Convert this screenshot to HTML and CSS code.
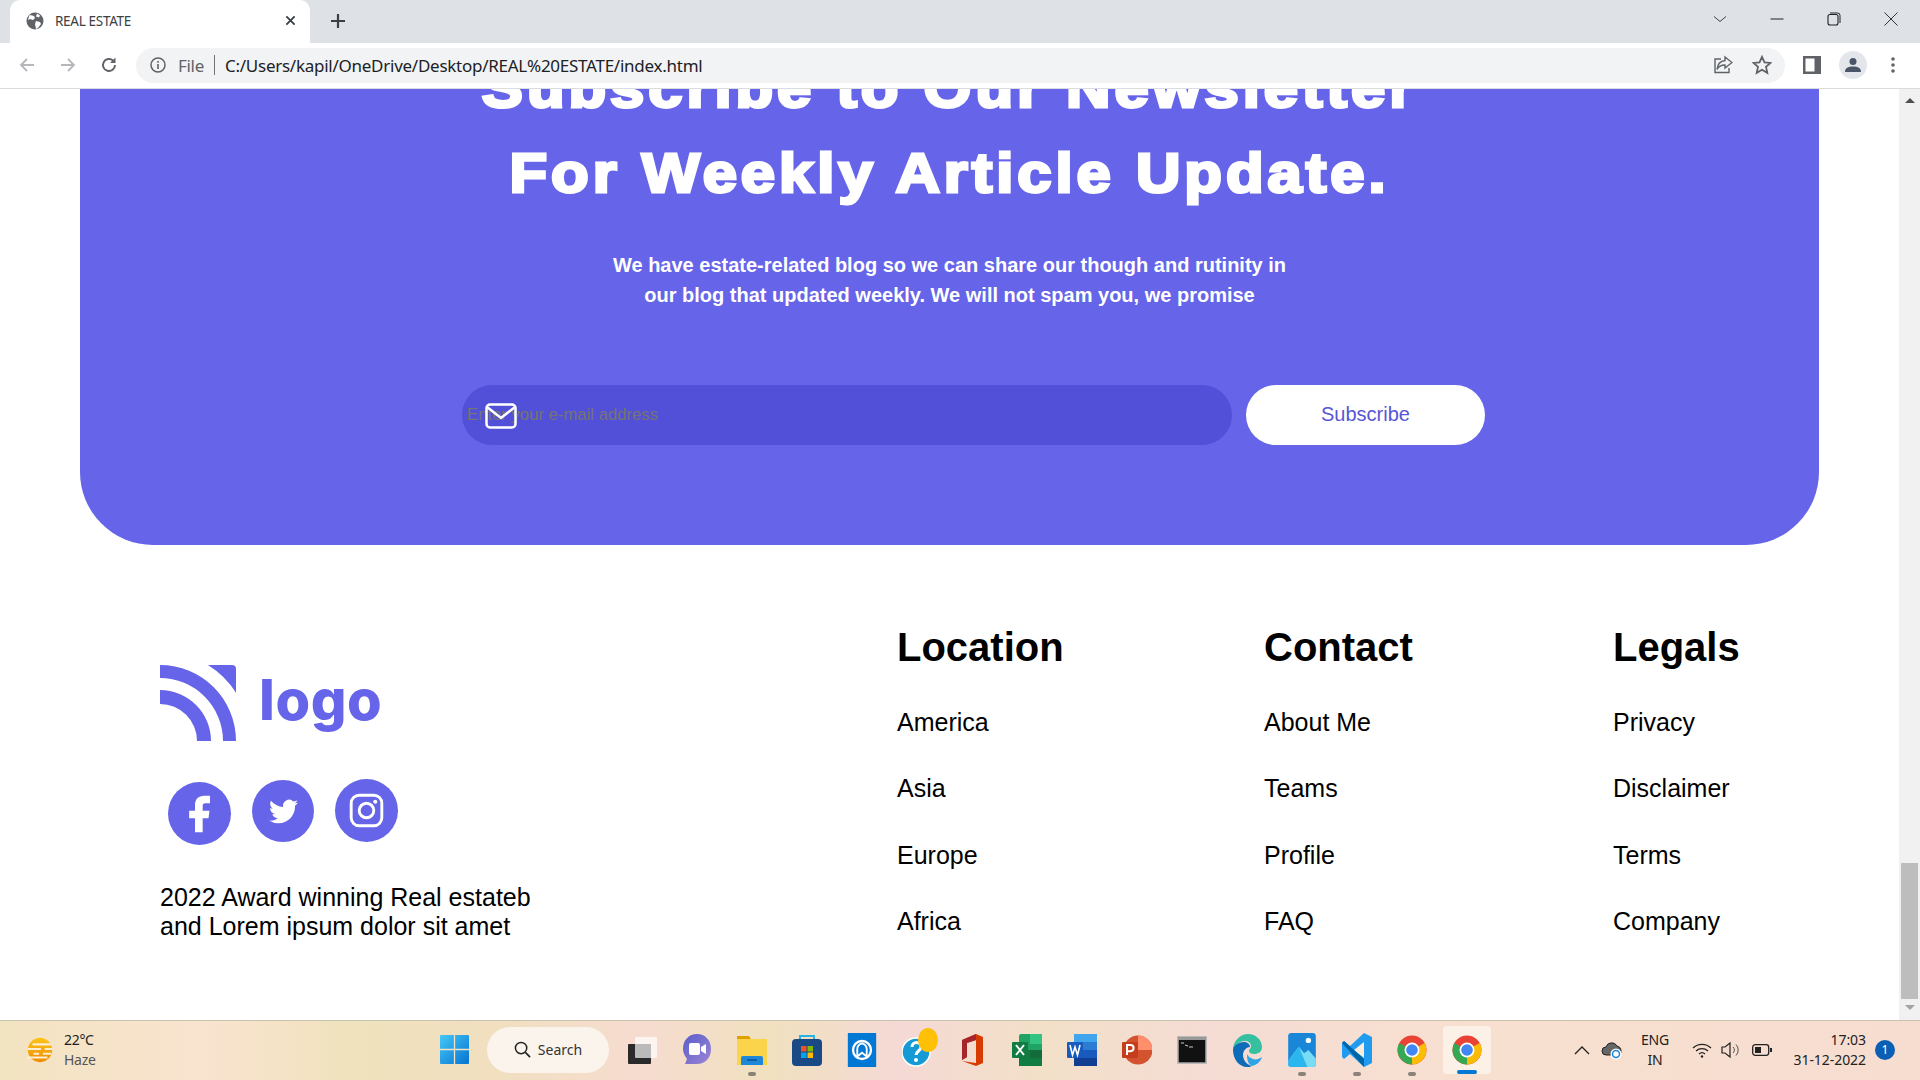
FILE: index.html
```html
<!DOCTYPE html>
<html lang="en">
<head>
<meta charset="utf-8">
<title>REAL ESTATE</title>
<link rel="stylesheet" href="styles.css">
</head>
<body>
<div class="screen">
  <header class="tabstrip">
    <div class="tab">
      <svg class="favicon" viewBox="0 0 18 18"><circle cx="9" cy="9" r="8.500" fill="#5f6368"/><path d="M4 3l4 1 1 2-2 2-3-1-2 1 1-4zM10 9l4 1 1 2-3 4-2 1-1-5zM11 1.500l3 2-1 2-3-1z" fill="#fff"/></svg>
      <span class="tab-title">REAL ESTATE</span>
      <svg class="tab-close" viewBox="0 0 12 12"><path d="M1.500 1.500l9 9M10.500 1.500l-9 9" stroke="#3c4043" stroke-width="2" fill="none"/></svg>
    </div>
    <svg class="newtab" viewBox="0 0 16 16"><path d="M8 1v14M1 8h14" stroke="#3c4043" stroke-width="2.200" fill="none"/></svg>
    <div class="winctl">
      <svg class="winicon" viewBox="0 0 14 14"><path d="M1 4.500l6 5 6-5" stroke="#444" fill="none"/></svg>
      <svg class="winicon" viewBox="0 0 14 14"><path d="M0.500 7h13" stroke="#222" fill="none"/></svg>
      <svg class="winicon" viewBox="0 0 14 14"><rect x="1" y="2.500" width="10" height="10.500" rx="2" stroke="#222" stroke-width="1.100" fill="none"/><path d="M3 1h7.500a2.500 2.500 0 0 1 2.500 2.500V11" stroke="#222" fill="none"/></svg>
      <svg class="winicon" viewBox="0 0 14 14"><path d="M0.500 0.500l13 13M13.500 0.500l-13 13" stroke="#333" fill="none"/></svg>
    </div>
  </header>
  <nav class="toolbar">
    <svg class="navicon" viewBox="0 0 18 18"><path d="M16 9H3M9 3L3 9l6 6" stroke="#b5b7ba" stroke-width="1.800" fill="none"/></svg>
    <svg class="navicon" viewBox="0 0 18 18"><path d="M2 9h13M9 3l6 6-6 6" stroke="#b5b7ba" stroke-width="1.800" fill="none"/></svg>
    <svg class="navicon" viewBox="0 0 18 18"><path d="M15 9a6 6 0 1 1-1.800-4.300" stroke="#5f6368" stroke-width="1.900" fill="none"/><path d="M15.500 1.500v5.500H10z" fill="#5f6368"/></svg>
    <div class="omnibox">
      <svg class="info" viewBox="0 0 16 16"><circle cx="8" cy="8" r="7" stroke="#5f6368" stroke-width="1.500" fill="none"/><path d="M8 7v5M8 4v1.800" stroke="#5f6368" stroke-width="1.600"/></svg>
      <span class="scheme">File</span>
      <span class="sep"></span>
      <span class="url">C:/Users/kapil/OneDrive/Desktop/REAL%20ESTATE/index.html</span>
      <svg class="omni-share" viewBox="0 0 20 20"><path d="M8 4H2v13.500h14V13" stroke="#5f6368" stroke-width="1.400" fill="none"/><path d="M12 2l7 5.500-7 5.500V10c-4 0-6.500 1.500-8 4.500C4.500 9.500 7.500 6 12 5.500z" stroke="#5f6368" stroke-width="1.400" fill="#f1f3f4"/></svg>
      <svg class="omni-star" viewBox="0 0 20 20"><path d="M10 1.800l2.500 5.500 6 .6-4.500 4 1.300 6L10 14.800l-5.300 3.100 1.300-6-4.500-4 6-.6z" stroke="#5f6368" stroke-width="1.800" fill="none"/></svg>
    </div>
    <svg class="panel" viewBox="0 0 18 18"><rect x="0" y="0" width="18" height="18" fill="#5f6368"/><rect x="2.500" y="2.500" width="9" height="13" fill="#fff"/></svg>
    <div class="avatar">
      <svg class="avatar-icon" viewBox="0 0 16 16"><circle cx="8" cy="4.500" r="3.500" fill="#4a5568"/><path d="M0 15c0-4 3-5.500 8-5.500s8 1.500 8 5.500z" fill="#4a5568"/></svg>
    </div>
    <svg class="menu" viewBox="0 0 4 18"><circle cx="2" cy="3" r="1.800" fill="#5f6368"/><circle cx="2" cy="9" r="1.800" fill="#5f6368"/><circle cx="2" cy="15" r="1.800" fill="#5f6368"/></svg>
  </nav>

  <div class="viewport">
    <main class="page">
      <section class="newsletter">
        <h2 class="news-title">Subscribe to Our Newsletter<br>For Weekly Article Update.</h2>
        <p class="news-text">We have estate-related blog so we can share our though and rutinity in<br>our blog that updated weekly. We will not spam you, we promise</p>
        <form class="news-form">
          <div class="field">
            <input class="email" type="text" placeholder="Enter your e-mail address">
            <svg class="envelope" viewBox="0 0 32 26"><rect x="1.500" y="1.500" width="29" height="23" rx="3.500" stroke="#fff" stroke-width="2.500" fill="none"/><path d="M2 4l14 11L30 4" stroke="#fff" stroke-width="2.500" fill="none"/></svg>
          </div>
          <button class="subscribe" type="button">Subscribe</button>
        </form>
      </section>
      <footer class="footer">
        <div class="brand">
          <div class="logo">
            <svg class="logo-mark" viewBox="0 0 76 76"><path d="M48 0H72a4 4 0 0 1 4 4V27.700A90 90 0 0 0 48 0Z" fill="#6664e8"/><path d="M0 0A76 76 0 0 1 76 76H63A63 63 0 0 0 0 13Z" fill="#6664e8"/><path d="M0 25A51 51 0 0 1 51 76H37A37 37 0 0 0 0 39Z" fill="#6664e8"/></svg>
            <span class="logo-word">logo</span>
          </div>
          <div class="social">
            <span class="social-dot social-fb"><svg class="fb-icon" viewBox="0 0 24 24"><path d="M15 5.500h3V1h-3.500c-3.500 0-5.500 2.200-5.500 5.500V10H5.500v4.500H9V23h4.600v-8.500h3.500l.6-4.500h-4.100V7c0-1 .5-1.500 1.400-1.500z" fill="#fff"/></svg></span>
            <span class="social-dot social-tw"><svg class="tw-icon" viewBox="0 0 24 24"><path d="M23.953 4.570a10 10 0 01-2.825.775 4.958 4.958 0 002.163-2.723c-.951.555-2.005.959-3.127 1.184a4.920 4.920 0 00-8.384 4.482C7.690 8.095 4.067 6.130 1.640 3.162a4.822 4.822 0 00-.666 2.475c0 1.710.870 3.213 2.188 4.096a4.904 4.904 0 01-2.228-.616v.060a4.923 4.923 0 003.946 4.827 4.996 4.996 0 01-2.212.085 4.936 4.936 0 004.604 3.417 9.867 9.867 0 01-6.102 2.105c-.390 0-.779-.023-1.170-.067a13.995 13.995 0 007.557 2.209c9.053 0 13.998-7.496 13.998-13.985 0-.210 0-.420-.015-.630A9.935 9.935 0 0024 4.590z" fill="#fff"/></svg></span>
            <span class="social-dot"><svg class="ig" viewBox="0 0 24 24"><rect x="1.500" y="1.500" width="21" height="21" rx="5.500" stroke="#fff" stroke-width="2" fill="none"/><circle cx="12" cy="12" r="5" stroke="#fff" stroke-width="2" fill="none"/><circle cx="18" cy="6" r="1.400" fill="#fff"/></svg></span>
          </div>
          <p class="brand-text">2022 Award winning Real estateb<br>and Lorem ipsum dolor sit amet</p>
        </div>
        <div class="col col-location">
          <h3 class="col-title">Location</h3>
          <a class="col-link">America</a><a class="col-link">Asia</a><a class="col-link">Europe</a><a class="col-link">Africa</a>
        </div>
        <div class="col col-contact">
          <h3 class="col-title">Contact</h3>
          <a class="col-link">About Me</a><a class="col-link">Teams</a><a class="col-link">Profile</a><a class="col-link">FAQ</a>
        </div>
        <div class="col">
          <h3 class="col-title">Legals</h3>
          <a class="col-link">Privacy</a><a class="col-link">Disclaimer</a><a class="col-link">Terms</a><a class="col-link">Company</a>
        </div>
      </footer>
    </main>
    <aside class="scrollbar">
      <span class="arrow-up"></span>
      <span class="thumb"></span>
      <span class="arrow-down"></span>
    </aside>
  </div>

  <div class="taskbar">
    <div class="weather">
      <svg class="weather-icon" viewBox="0 0 30 32"><defs><linearGradient id="sun" x1="0" y1="0" x2="0" y2="1"><stop offset="0" stop-color="#fcc419"/><stop offset="1" stop-color="#f08c00"/></linearGradient></defs><circle cx="15" cy="16" r="13" fill="url(#sun)"/><path d="M7 10h20M2 15h14M20 15h8M8 20h6M18 20h9M1 24h22" stroke="#fbeed3" stroke-width="2.200"/></svg>
      <div class="weather-text"><span class="temp">22°C</span><span class="cond">Haze</span></div>
    </div>
    <svg class="start" viewBox="0 0 29 29"><defs><linearGradient id="win" x1="0" y1="0" x2="1" y2="1"><stop offset="0" stop-color="#45c8f8"/><stop offset="1" stop-color="#0673d0"/></linearGradient><linearGradient id="meet" x1="0" y1="0" x2="1" y2="1"><stop offset="0" stop-color="#5a5cc8"/><stop offset="1" stop-color="#9b86d6"/></linearGradient></defs><rect width="29" height="29" fill="url(#win)" rx="1"/><path d="M14.500 0v29M0 14.500h29" stroke="#f2e3c6" stroke-width="1.300"/></svg>
    <div class="search">
      <svg class="search-icon" viewBox="0 0 18 18"><circle cx="7.500" cy="7.500" r="6" stroke="#222" stroke-width="1.600" fill="none"/><path d="M12 12l5 5" stroke="#222" stroke-width="1.800"/></svg>
      <span class="search-text">Search</span>
    </div>
    <div class="apps">
      <div class="app"><svg class="app-icon" viewBox="0 0 30 34"><rect x="1" y="11" width="23" height="20" rx="1" fill="#2a2a2a"/><rect x="8" y="4" width="22" height="21" rx="1" fill="#fff" fill-opacity=".68"/></svg></div>
      <div class="app"><svg class="app-icon" viewBox="0 0 30 34"><path d="M15 1c8 0 14 6 14 15s-6 15-14 15H3l2-5C3 23 1 20 1 16 1 7 7 1 15 1z" fill="url(#meet)"/><rect x="7" y="10" width="11" height="12" rx="2" fill="#fff"/><path d="M19 14l5-3v10l-5-3z" fill="#fff"/></svg></div>
      <div class="app has-dot"><svg class="app-icon" viewBox="0 0 30 34"><path d="M0 3h12l2 3v4H0z" fill="#e0a100"/><rect y="6" width="30" height="26" fill="#fbd44c"/><path d="M4 32v-7a2 2 0 0 1 2-2h18a2 2 0 0 1 2 2v7z" fill="#1e88d6"/><rect x="10" y="26" width="10" height="2" fill="#0d5da8"/></svg></div>
      <div class="app"><svg class="app-icon" viewBox="0 0 30 34"><path d="M8 7V3h14v4" stroke="#2bb3e8" stroke-width="2" fill="none"/><rect y="6" width="30" height="27" rx="4" fill="#1a4a85"/><rect x="9" y="13" width="5.500" height="5.500" fill="#f25022"/><rect x="15.500" y="13" width="5.500" height="5.500" fill="#7fba00"/><rect x="9" y="19.500" width="5.500" height="5.500" fill="#00a4ef"/><rect x="15.500" y="19.500" width="5.500" height="5.500" fill="#ffb900"/></svg></div>
      <div class="app"><svg class="app-icon" viewBox="0 0 30 36"><rect width="30" height="36" fill="#0078d4"/><circle cx="15" cy="18" r="9.500" stroke="#fff" stroke-width="2.500" fill="none"/><path d="M10 25v-8c0-3 2-5 5-6 3 1 5 3 5 6v8l-5-4z" stroke="#fff" stroke-width="2" fill="none"/></svg></div>
      <div class="app has-badge"><svg class="app-icon" viewBox="0 0 30 34"><circle cx="14" cy="19" r="14" fill="#149ad4" stroke="#fff" stroke-width="1.500"/><path d="M10 14c0-6 9-6 9 0 0 4-5 4-5 8" stroke="#fff" stroke-width="3" fill="none"/><circle cx="14" cy="27" r="2" fill="#fff"/></svg><span class="badge-dot"></span></div>
      <div class="app"><svg class="app-icon" viewBox="0 0 26 34"><path d="M3 7L17 1l7 3v26l-7 3-14-5 14 2V7L8 10v14L3 27z" fill="#d83b01"/><path d="M3 7L17 1v6L8 10v14l-5 3z" fill="#a4262c"/></svg></div>
      <div class="app"><svg class="app-icon" viewBox="0 0 30 34"><rect x="7" y="1" width="23" height="32" rx="2" fill="#21a366"/><rect x="18" y="1" width="12" height="10" fill="#33c481"/><rect x="7" y="17" width="23" height="16" fill="#107c41"/><rect x="18" y="17" width="12" height="8" fill="#185c37" opacity=".5"/><rect y="9" width="16" height="16" rx="1" fill="#107c41"/><path d="M4 12l8 10M12 12L4 22" stroke="#fff" stroke-width="2"/></svg></div>
      <div class="app"><svg class="app-icon" viewBox="0 0 30 34"><rect x="7" y="1" width="23" height="32" rx="2" fill="#2b7cd3"/><rect x="7" y="1" width="23" height="8" fill="#41a5ee"/><rect x="7" y="17" width="23" height="8" fill="#185abd"/><rect x="7" y="25" width="23" height="8" fill="#103f91"/><rect y="9" width="16" height="16" rx="1" fill="#185abd"/><path d="M3 12l2.500 10L8 14l2.500 8L13 12" stroke="#fff" stroke-width="1.600" fill="none"/></svg></div>
      <div class="app"><svg class="app-icon" viewBox="0 0 30 34"><circle cx="16" cy="17" r="14.500" fill="#d35230"/><path d="M16 2.500A14.500 14.500 0 0 1 30.500 17H16z" fill="#ff8f6b"/><rect y="9" width="16" height="16" rx="1" fill="#c43e1c"/><path d="M5 22V12h3.500a3 3 0 0 1 0 6.200H5" stroke="#fff" stroke-width="2" fill="none"/></svg></div>
      <div class="app"><svg class="app-icon" viewBox="0 0 30 30"><rect x="1" y="2" width="28" height="26" fill="#111" stroke="#aaa" stroke-width="1.500"/><rect x="1" y="2" width="28" height="3" fill="#999"/><path d="M4 8h3M8 10l3 1M12 12h4" stroke="#ccc"/></svg></div>
      <div class="app"><svg class="app-icon" viewBox="0 0 30 34"><path d="M1 17C1 8 8 1 16 1c8 0 14 6 14 13 0 5-4 7-8 7-3 0-5-1-5-3 0-2 2-2 2-5 0-3-3-5-6-5C8 8 1 13 1 17z" fill="#35c1a0"/><path d="M1 17c0-4 5-8 11-8 3 0 6 2 6 5-3 0-7 3-7 8 0 5 4 10 9 11-2 1-3 1-5 1C7 34 1 26 1 17z" fill="#0c6cb8"/><path d="M20 33c5-1 9-5 10-9-3 2-6 3-9 2-3-1-5-3-6-5 0 6 1 10 5 12z" fill="#2fa5e6"/></svg></div>
      <div class="app has-dot"><svg class="app-icon" viewBox="0 0 26 32"><rect width="26" height="32" rx="3" fill="#1a86d8"/><path d="M0 26l10-13 5 6 4-3 7 8v5a3 3 0 0 1-3 3H3a3 3 0 0 1-3-3z" fill="#79dcf5"/><path d="M0 26l10-13 8 19H3a3 3 0 0 1-3-3z" fill="#2bb6ee"/><circle cx="19" cy="7" r="2.500" fill="#fff"/></svg></div>
      <div class="app has-dot"><svg class="app-icon" viewBox="0 0 30 34"><path d="M22 0l8 4v26l-8 4-14-13-6 5-2-2v-14l2-2 6 5z" fill="#1f9cf0"/><path d="M22 9L12 17l10 8z" fill="#fbeed8"/><path d="M0 10l2-2 20 18v8z" fill="#0065a9"/></svg></div>
      <div class="app has-dot"><svg class="app-icon" viewBox="0 0 32 32"><circle cx="16" cy="16" r="15.500" fill="#ea4335"/><path d="M16 16L29.500 8.500A15.500 15.500 0 0 1 16 31.500z" fill="#fbbc04"/><path d="M16 16L16 31.500A15.500 15.500 0 0 1 2.500 8.500z" fill="#34a853"/><circle cx="16" cy="16" r="8" fill="#fff"/><circle cx="16" cy="16" r="6.200" fill="#4285f4"/></svg></div>
      <div class="app app-active"><svg class="app-icon" viewBox="0 0 32 32"><circle cx="16" cy="16" r="15.500" fill="#ea4335"/><path d="M16 16L29.500 8.500A15.500 15.500 0 0 1 16 31.500z" fill="#fbbc04"/><path d="M16 16L16 31.500A15.500 15.500 0 0 1 2.500 8.500z" fill="#34a853"/><circle cx="16" cy="16" r="8" fill="#fff"/><circle cx="16" cy="16" r="6.200" fill="#4285f4"/></svg></div>
    </div>
    <div class="tray">
      <svg class="tray-chevron" viewBox="0 0 16 10"><path d="M1 9l7-7 7 7" stroke="#222" stroke-width="1.300" fill="none"/></svg>
      <svg class="tray-cloud" viewBox="0 0 22 20"><path d="M5 15a4 4 0 0 1 0-8 6 6 0 0 1 11-1 5 5 0 0 1 2 9z" fill="#666" stroke="#222"/><circle cx="15" cy="14" r="5.500" fill="#fff"/><circle cx="15" cy="14" r="3.500" stroke="#1a86d8" stroke-width="1.500" fill="none"/></svg>
      <div class="lang"><span>ENG</span><span>IN</span></div>
      <svg class="tray-wifi" viewBox="0 0 20 16"><path d="M1 6a13 13 0 0 1 18 0M4 9a9 9 0 0 1 12 0M7 12a4.500 4.500 0 0 1 6 0" stroke="#222" stroke-width="1.300" fill="none"/><circle cx="10" cy="14.500" r="1.200" fill="#222"/></svg>
      <svg class="tray-sound" viewBox="0 0 20 18"><path d="M1 6h3l5-4v14l-5-4H1z" stroke="#222" stroke-width="1.200" fill="none"/><path d="M12 6a4 4 0 0 1 0 6M15 3.500a8 8 0 0 1 0 11" stroke="#555" fill="none"/></svg>
      <svg class="tray-battery" viewBox="0 0 20 12"><rect x="0.700" y="0.700" width="16" height="10.600" rx="2.500" stroke="#222" stroke-width="1.300" fill="none"/><rect x="3" y="3" width="6" height="6" fill="#222"/><rect x="18" y="4" width="2" height="4" fill="#222"/></svg>
      <div class="clock"><span>17:03</span><span>31-12-2022</span></div>
      <span class="notif">1</span>
    </div>
  </div>
</div>
</body>
</html>
```

FILE: styles.css
```css
* { box-sizing: border-box; }
html, body { margin: 0; height: 100%; overflow: hidden; }
body { font-family: "Liberation Sans", Arial, sans-serif; background: #fff; }
.screen { width: 1920px; height: 1080px; display: flex; flex-direction: column; }

/* browser tab strip */
.tabstrip { height: 43px; flex: none; background: #dee1e6; display: flex; align-items: flex-end; padding-left: 10px; }
.tab { width: 300px; height: 43px; background: #fff; border-radius: 10px 10px 0 0; display: flex; align-items: center; padding: 0 14px 2px 16px; }
.favicon { width: 18px; height: 18px; flex: none; }
.tab-title { font-family: "Noto Sans", sans-serif; font-size: 13.500px; color: #3c4043; margin-left: 11px; flex: 1; letter-spacing: -0.300px; }
.tab-close { width: 11px; height: 11px; flex: none; }
.newtab { width: 16px; height: 16px; margin: 0 0 14px 20px; flex: none; }
.winctl { margin-left: auto; align-self: stretch; display: flex; align-items: center; gap: 43px; padding: 0 22px 6px 0; }
.winicon { width: 14px; height: 14px; flex: none; }

/* browser toolbar */
.toolbar { height: 46px; flex: none; background: #fff; border-bottom: 1px solid #dadce0; display: flex; align-items: center; padding: 0 0 1px 18px; }
.navicon { width: 18px; height: 18px; flex: none; margin-right: 23px; }
.omnibox { width: 1649px; height: 35px; margin-left: -5px; background: #f1f3f4; border-radius: 18px; display: flex; align-items: center; padding: 0 13px 0 14px; }
.info { width: 16px; height: 16px; flex: none; }
.scheme { font-family: "Noto Sans", sans-serif; font-size: 17px; color: #5f6368; margin-left: 12px; letter-spacing: -0.300px; }
.sep { width: 1px; height: 20px; background: #70757a; margin: 0 10px 0 10px; }
.url { font-family: "Noto Sans", sans-serif; font-size: 17px; color: #202124; letter-spacing: -0.260px; flex: 1; }
.omni-share { width: 20px; height: 20px; flex: none; }
.omni-star { width: 20px; height: 20px; flex: none; margin: 0 0 0 19px; }
.panel { width: 18px; height: 18px; flex: none; margin-left: 18px; }
.avatar { width: 28px; height: 28px; border-radius: 50%; background: #e3e6ea; margin-left: 18px; display: flex; align-items: center; justify-content: center; flex: none; }
.avatar-icon { width: 16px; height: 16px; }
.menu { width: 4px; height: 18px; margin-left: 24px; flex: none; }

/* page viewport */
.viewport { flex: 1; min-height: 0; display: flex; }
.page { flex: 1; min-width: 0; overflow: hidden; background: #fff; }
.scrollbar { width: 21px; flex: none; background: #f1f1f1; display: flex; flex-direction: column; align-items: center; }
.arrow-up { margin-top: 9px; border: 5px solid transparent; border-top: 0; border-bottom: 5px solid #505050; }
.thumb { width: 17px; height: 136px; background: #bdbdbd; margin-top: 760px; }
.arrow-down { margin-top: 6px; border: 5px solid transparent; border-bottom: 0; border-top: 5px solid #a3a3a3; }

/* newsletter card: its heading is scrolled partly out of view */
.newsletter { display: flow-root; margin: 0 80px; height: 456px; background: #6664e8; border-radius: 0 0 73px 73px; color: #fff; text-align: center; }
.news-title { margin: -44px 0 0; font-size: 56px; line-height: 85px; font-weight: 700; letter-spacing: 3.600px; -webkit-text-stroke: 3px #fff; transform: scaleX(1.1); }
.news-text { margin: 35px 0 0; font-size: 20px; line-height: 30px; font-weight: 700; }
.news-form { display: flex; gap: 14px; padding-left: 382px; margin-top: 75px; }
.field { position: relative; width: 770px; height: 60px; }
.email { width: 100%; height: 100%; border: 0; outline: 0; border-radius: 30px; background: #5250d9; padding: 0 5px; font-family: "Liberation Sans", sans-serif; font-size: 16.700px; }
.email::placeholder { color: #757570; }
.envelope { position: absolute; left: 23px; top: 18px; width: 32px; height: 26px; }
.subscribe { width: 239px; height: 60px; border: 0; border-radius: 30px; padding: 0 0 2px; background: #fff; color: #5856d6; font-family: "Liberation Sans", sans-serif; font-size: 20px; }

/* footer */
.footer { display: flex; padding-left: 160px; }
.brand { width: 737px; padding-top: 120px; }
.logo { display: flex; align-items: flex-start; }
.logo-mark { width: 76px; height: 76px; flex: none; }
.logo-word { font-family: Inter, sans-serif; font-weight: 800; font-size: 56px; line-height: 60px; letter-spacing: 0.600px; color: #6664e8; margin: 5px 0 0 23px; }
.social { display: flex; gap: 21px; margin: 38px 0 0 7px; align-items: flex-start; height: 66px; }
.social-dot { width: 63px; height: 63px; border-radius: 50%; background: #6664e8; display: flex; align-items: center; justify-content: center; }
.social-fb { margin: 3px 0 0 1px; }
.social-tw { margin-top: 1px; width: 62px; height: 62px; }
.fb-icon { width: 40px; height: 40px; }
.tw-icon { width: 29px; height: 29px; }
.ig { width: 35px; height: 35px; }
.brand-text { margin: 38px 0 0; font-size: 25px; line-height: 29px; color: #000; }
.col { display: flex; flex-direction: column; padding-top: 79px; }
.col-location { width: 367px; }
.col-contact { width: 349px; }
.col-title { margin: 0 0 37px; font-size: 40px; line-height: 46px; font-weight: 700; color: #000; }
.col-link { font-size: 25px; line-height: 30px; color: #000; margin-bottom: 36.300px; }

/* windows taskbar */
.taskbar { height: 60px; flex: none; border-top: 1px solid #c9c2b0; background: linear-gradient(90deg, #f2e3c0 0, #f9e4d0 200px, #f0e2bd 345px, #f1dfc0 500px, #f6dcd0 640px, #f0e1bf 770px, #f5d9d5 900px, #f2e0c8 1040px, #f5dcd4 1200px, #f8e0d0 1500px, #f6ddd0 1920px); display: flex; align-items: center; position: relative; padding: 0 0 2px 26px; }
.weather { width: 414px; display: flex; align-items: center; flex: none; }
.weather-icon { width: 28px; height: 32px; flex: none; }
.weather-text { display: flex; flex-direction: column; margin-left: 10px; font-family: "Noto Sans", sans-serif; font-size: 14px; line-height: 20px; letter-spacing: -0.300px; }
.temp { color: #222; }
.cond { color: #555; }
.start { width: 29px; height: 29px; flex: none; }
.search { width: 122px; height: 46px; border-radius: 23px; background: #faf4ec; margin-left: 18px; display: flex; align-items: center; justify-content: center; gap: 7px; flex: none; }
.search-icon { width: 17px; height: 17px; flex: none; }
.search-text { font-family: "Noto Sans", sans-serif; font-size: 14px; color: #333; letter-spacing: 0; }
.apps { display: flex; gap: 25px; margin-left: 18px; flex: none; }
.app { width: 30px; height: 36px; display: flex; align-items: center; justify-content: center; position: relative; }
.app-icon { width: 30px; height: 34px; flex: none; }
.has-dot::after { content: ""; position: absolute; left: 11px; bottom: -8px; width: 8px; height: 4px; border-radius: 2px; background: #8a8279; }
.badge-dot { position: absolute; right: -6px; top: -4px; width: 20px; height: 24px; border-radius: 50%; background: #ffc107; }
.app-active::before { content: ""; position: absolute; left: -9px; top: -6px; width: 48px; height: 48px; border-radius: 4px; background: #fbf1e7; }
.app-active::after { content: ""; position: absolute; left: 5px; bottom: -6px; width: 20px; height: 4px; border-radius: 2px; background: #0078d4; }
.app-active .app-icon { position: relative; }
.tray { display: flex; align-items: center; margin-left: 90px; flex: none; }
.tray-chevron { width: 16px; height: 10px; flex: none; margin-left: 2px; }
.tray-cloud { width: 22px; height: 20px; margin-left: 11px; flex: none; }
.lang { width: 44px; margin-left: 10px; display: flex; flex-direction: column; align-items: center; font-family: "Noto Sans", sans-serif; font-size: 14px; line-height: 20px; color: #222; letter-spacing: -0.200px; }
.tray-wifi { width: 20px; height: 16px; margin-left: 15px; flex: none; }
.tray-sound { width: 20px; height: 18px; margin-left: 9px; flex: none; }
.tray-battery { width: 20px; height: 12px; margin-left: 11px; flex: none; }
.clock { width: 92px; margin-left: 2px; display: flex; flex-direction: column; align-items: flex-end; font-family: "Noto Sans", sans-serif; font-size: 14px; line-height: 20px; color: #222; letter-spacing: -0.060px; }
.notif { width: 20px; height: 20px; border-radius: 50%; background: #0a5fb4; color: #fff; font-family: "Noto Sans", sans-serif; font-size: 12px; line-height: 20px; text-align: center; margin-left: 9px; flex: none; }
```
